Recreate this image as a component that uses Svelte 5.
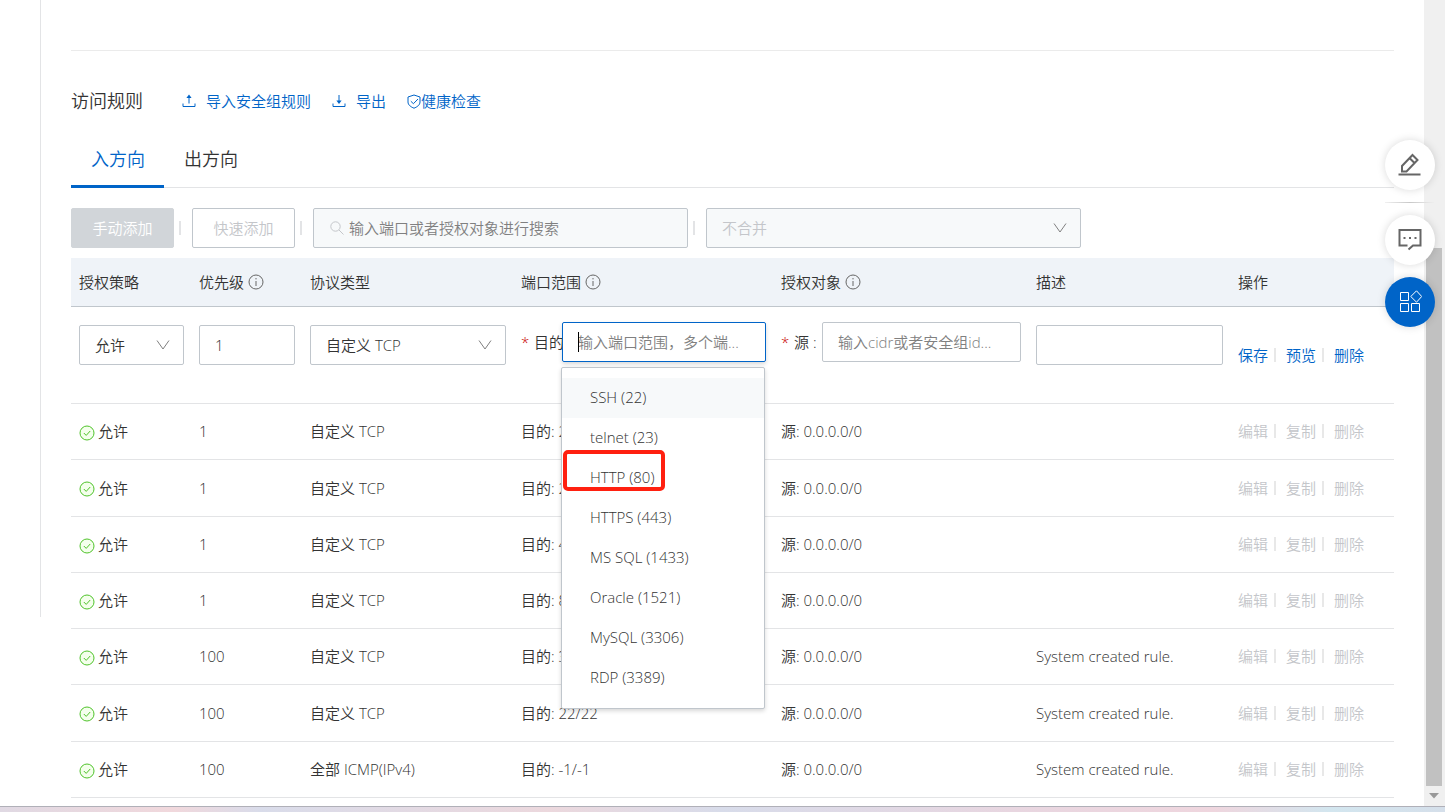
<script>
  const ports = [
    { name: 'SSH', port: 22 },
    { name: 'telnet', port: 23 },
    { name: 'HTTP', port: 80, marked: true },
    { name: 'HTTPS', port: 443 },
    { name: 'MS SQL', port: 1433 },
    { name: 'Oracle', port: 1521 },
    { name: 'MySQL', port: 3306 },
    { name: 'RDP', port: 3389 },
  ];

  const rules = [
    { priority: 1, protocol: '自定义 TCP', port: '21/21', desc: '' },
    { priority: 1, protocol: '自定义 TCP', port: '20/20', desc: '' },
    { priority: 1, protocol: '自定义 TCP', port: '443/443', desc: '' },
    { priority: 1, protocol: '自定义 TCP', port: '80/80', desc: '' },
    { priority: 100, protocol: '自定义 TCP', port: '3389/3389', desc: 'System created rule.' },
    { priority: 100, protocol: '自定义 TCP', port: '22/22', desc: 'System created rule.' },
    { priority: 100, protocol: '全部 ICMP(IPv4)', port: '-1/-1', desc: 'System created rule.' },
  ];

  let tab = $state('in');
  let priority = $state('1');
  let portRange = $state('');
  let source = $state('');
  let desc = $state('');
  let search = $state('');
  let active = $state(0);
</script>

{#snippet chevron()}
  <svg class="chevron" viewBox="0 0 14 12" width="14" height="12" aria-hidden="true">
    <path d="M1 1.5 L7 10 L13 1.5" />
  </svg>
{/snippet}

{#snippet info()}
  <svg class="info" viewBox="0 0 16 16" width="16" height="16" aria-hidden="true">
    <circle cx="8" cy="8" r="7" />
    <path d="M8 7v5M8 4v1.4" />
  </svg>
{/snippet}

<div class="page">
  <div class="body">
    <aside class="side"></aside>

    <main>
      <div class="top"></div>

      <header class="title">
        <h2>访问规则</h2>
        <a href="#import">
          <svg class="line-icon" viewBox="0 0 14 14" width="14" height="14" aria-hidden="true">
            <path d="M1 9.5v3h12v-3M7 9.5V2" /><path class="fill" d="M7 0.5l2.6 3.4H4.4z" />
          </svg>
          <span class="spaced">导入安全组规则</span>
        </a>
        <a href="#export">
          <svg class="line-icon" viewBox="0 0 14 14" width="14" height="14" aria-hidden="true">
            <path d="M1 9.5v3h12v-3M7 1v6" /><path class="fill" d="M7 10l2.6-3.4H4.4z" />
          </svg>
          <span class="spaced">导出</span>
        </a>
        <a href="#check">
          <svg class="line-icon" viewBox="0 0 14 15" width="14" height="15" aria-hidden="true">
            <path d="M7 1l6 2v5c0 3-3 5-6 6.200C4 13 1 11 1 8V3z" /><path d="M3.800 7.200l2.600 2.500L11 5" />
          </svg>
          <span>健康检查</span>
        </a>
      </header>

      <nav class="tabs">
        <button class:current={tab === 'in'} onclick={() => (tab = 'in')}>入方向</button>
        <button class:current={tab === 'out'} onclick={() => (tab = 'out')}>出方向</button>
      </nav>

      <div class="toolbar">
        <button class="btn solid" disabled>手动添加</button>
        <span class="bar"></span>
        <button class="btn" disabled>快速添加</button>
        <span class="bar"></span>
        <label class="search">
          <svg viewBox="0 0 14 14" width="14" height="14" aria-hidden="true">
            <circle cx="5.500" cy="5.500" r="4.700" /><path d="M9 9l4.500 4.500" />
          </svg>
          <input bind:value={search} type="text" placeholder="输入端口或者授权对象进行搜索" />
        </label>
        <span class="bar"></span>
        <div class="select wide">
          <select disabled aria-label="合并方式"><option>不合并</option></select>
          {@render chevron()}
        </div>
      </div>

      <table>
        <colgroup>
          <col class="c-policy" />
          <col class="c-priority" />
          <col class="c-protocol" />
          <col class="c-port" />
          <col class="c-source" />
          <col class="c-desc" />
          <col class="c-action" />
        </colgroup>
        <thead>
          <tr>
            <th>授权策略</th>
            <th>优先级 {@render info()}</th>
            <th>协议类型</th>
            <th>端口范围 {@render info()}</th>
            <th>授权对象 {@render info()}</th>
            <th>描述</th>
            <th>操作</th>
          </tr>
        </thead>
        <tbody class="edit">
          <tr>
            <td>
              <div class="select">
                <select aria-label="授权策略"><option>允许</option><option>拒绝</option></select>
                {@render chevron()}
              </div>
            </td>
            <td><input class="box" bind:value={priority} type="text" aria-label="优先级" /></td>
            <td>
              <div class="select">
                <select aria-label="协议类型"><option>自定义 TCP</option><option>全部 ICMP(IPv4)</option></select>
                {@render chevron()}
              </div>
            </td>
            <td class="required">
              <div class="field">
                <label for="port"><i>*</i>目的:</label>
                <div class="combo">
                  <input id="port" class="box focus" bind:value={portRange} type="text" placeholder="输入端口范围，多个端..." />
                  <span class="caret"></span>
                  <ul class="menu">
                    {#each ports as p, i}
                      <li class:active={active === i} onmouseenter={() => (active = i)}>
                        {p.name} ({p.port})
                        {#if p.marked}<span class="mark"></span>{/if}
                      </li>
                    {/each}
                  </ul>
                </div>
              </div>
            </td>
            <td class="required">
              <div class="field">
                <label for="source"><i>*</i>源 :</label>
                <input id="source" class="box" bind:value={source} type="text" placeholder="输入cidr或者安全组id..." />
              </div>
            </td>
            <td><input class="box" bind:value={desc} type="text" aria-label="描述" /></td>
            <td class="ops">
              <div class="actions">
                <a href="#save">保存</a><span class="sep"></span>
                <a href="#preview">预览</a><span class="sep"></span>
                <a href="#delete">删除</a>
              </div>
            </td>
          </tr>
        </tbody>
        <tbody class="rules">
          {#each rules as rule}
            <tr>
              <td>
                <div class="policy">
                  <svg viewBox="0 0 16 16" width="16" height="16" aria-hidden="true">
                    <circle cx="8" cy="8" r="7" /><path d="M4.800 8l2.400 2.400 4-4.400" />
                  </svg>
                  允许
                </div>
              </td>
              <td>{rule.priority}</td>
              <td>{rule.protocol}</td>
              <td>目的: {rule.port}</td>
              <td>源: 0.0.0.0/0</td>
              <td>{rule.desc}</td>
              <td>
                <div class="actions">
                  <button disabled>编辑</button><span class="sep"></span>
                  <button disabled>复制</button><span class="sep"></span>
                  <button disabled>删除</button>
                </div>
              </td>
            </tr>
          {/each}
        </tbody>
      </table>
    </main>

    <div class="scrollbar">
      <div class="thumb"></div>
      <svg viewBox="0 0 10 6" width="10" height="6" aria-hidden="true"><path d="M0 0h10L5 5.500z" /></svg>
    </div>
  </div>

  <footer class="strip"></footer>

  <div class="float">
    <button aria-label="编辑">
      <svg viewBox="0 0 24 24" width="24" height="24" aria-hidden="true">
        <path d="M.5 21.500h22M4 18.500v-5.500L14.500 2l5 5L8.500 18.500zM11.500 5l5 5" />
      </svg>
    </button>
    <span class="rule"></span>
    <button aria-label="反馈">
      <svg viewBox="0 0 24 24" width="24" height="24" aria-hidden="true">
        <path d="M9.500 17.500H1.500V2h21v15.500H15l-4.500 4" />
        <path class="dots" d="M5.500 9h2v2h-2zM11 9h2v2h-2zM16.500 9h2v2h-2z" />
      </svg>
    </button>
    <button class="blue" aria-label="应用">
      <svg viewBox="0 0 24 24" width="24" height="24" aria-hidden="true">
        <path d="M2.500 2.500h8v8h-8zM2.500 13.500h8v8h-8zM13.500 13.500h8v8h-8zM18.500 .800l5.200 5.700-5.200 5.700-5.700-5.700z" />
      </svg>
    </button>
  </div>
</div>

<style>
  :global(body) {
    background: #fff;
  }

  .page {
    display: flex;
    flex-direction: column;
    min-height: 100vh;
    font-family: "Open Sans", "Noto Sans CJK SC", sans-serif;
    font-size: 15px;
    font-weight: 350;
    line-height: 20px;
    color: #333;
  }

  .page * {
    box-sizing: border-box;
  }

  button,
  input,
  select {
    font: inherit;
    color: inherit;
    margin: 0;
  }

  svg {
    fill: none;
    stroke: currentColor;
    flex: none;
  }

  a {
    color: #0064c8;
    text-decoration: none;
  }

  .body {
    display: flex;
    flex: 1;
  }

  .side {
    flex: none;
    width: 41px;
    height: 76vh;
    border-right: 1px solid #e3e4e6;
  }

  main {
    flex: 1;
    min-width: 0;
    padding: 0 30px 8px;
  }

  .top {
    height: 51px;
    border-bottom: 1px solid #ebebeb;
  }

  .title {
    display: flex;
    align-items: center;
    gap: 21px;
    padding-top: 36px;
    height: 64px;
  }

  .title h2 {
    margin: 0 18px 0 0;
    font-size: 18px;
    font-weight: inherit;
  }

  .title a {
    display: flex;
    align-items: center;
  }

  .spaced {
    margin-left: 10px;
  }

  .line-icon .fill {
    fill: currentColor;
    stroke: none;
  }

  .tabs {
    display: flex;
    margin-top: 20px;
    border-bottom: 1px solid #e3e4e6;
  }

  .tabs button {
    height: 53px;
    margin-bottom: -1px;
    padding: 0 19px 2px 20px;
    border: 0;
    border-bottom: 3px solid transparent;
    background: none;
    font-size: 18px;
    cursor: pointer;
  }

  .tabs .current {
    color: #0064c8;
    border-color: #0064c8;
  }

  .toolbar {
    display: flex;
    align-items: center;
    padding: 20px 0 10px;
  }

  .btn {
    width: 103px;
    height: 40px;
    padding: 0;
    border: 1px solid #c0c6cc;
    border-radius: 2px;
    background: #fff;
    color: #c4c6ca;
  }

  .solid {
    border-color: #d1d5d9;
    background: #d1d5d9;
    color: #fff;
  }

  .bar {
    width: 2px;
    height: 14px;
    margin: 0 11px 0 5px;
    background: #e3e4e6;
  }

  .search {
    display: flex;
    align-items: center;
    gap: 5px;
    width: 375px;
    height: 40px;
    padding: 0 16px;
    border: 1px solid #c0c6cc;
    border-radius: 2px;
    background: #f7f9fa;
    color: #c4c6ca;
  }

  .search input {
    flex: 1;
    min-width: 0;
    padding: 0;
    border: 0;
    outline: 0;
    background: none;
    color: #333;
  }

  ::placeholder {
    color: #808080;
    opacity: 1;
  }

  .select {
    display: grid;
    align-items: center;
  }

  .select > :global(*) {
    grid-area: 1 / 1;
  }

  .select select {
    width: 100%;
    height: 40px;
    padding: 0 15px;
    appearance: none;
    border: 1px solid #c0c6cc;
    border-radius: 2px;
    background: #fff;
    opacity: 1;
  }

  .wide {
    width: 375px;
  }

  .wide select {
    background: #f7f9fa;
    color: #c4c6ca;
  }

  .chevron {
    justify-self: end;
    margin-right: 14px;
    color: #808080;
    pointer-events: none;
  }

  table {
    width: 100%;
    table-layout: fixed;
    border-collapse: separate;
    border-spacing: 0;
  }

  .c-policy { width: 120px; }
  .c-priority { width: 111px; }
  .c-protocol { width: 211px; }
  .c-port { width: 260px; }
  .c-source { width: 255px; }
  .c-desc { width: 202px; }
  .c-action { width: 164px; }

  th,
  td {
    padding: 0 7px 0 8px;
    text-align: left;
    font-weight: inherit;
    white-space: nowrap;
  }

  th {
    height: 49px;
    background: #eff3f8;
    border-bottom: 1px solid #c0c6cc;
  }

  .info {
    vertical-align: -2px;
    color: #666;
  }

  td {
    height: 56px;
    border-bottom: 1px solid #e3e4e6;
  }

  .rules td {
    padding-bottom: 1px;
  }

  .rules tr:nth-child(4n + 2) td {
    height: 57px;
  }

  .edit td {
    height: 97px;
    padding-top: 18px;
    vertical-align: top;
  }

  .edit .required {
    padding-top: 15px;
  }

  .edit .ops {
    padding-top: 38px;
  }

  .box {
    display: block;
    width: 100%;
    height: 40px;
    padding: 0 15px;
    border: 1px solid #c0c6cc;
    border-radius: 2px;
    outline: 0;
    background: #fff;
  }

  .focus {
    border-color: #0064c8;
    box-shadow: 0 2px 4px rgba(0, 0, 0, 0.16);
  }

  .field {
    display: flex;
    align-items: center;
  }

  .field label {
    flex: none;
    width: 41px;
  }

  .field i {
    display: inline-block;
    width: 13px;
    color: #c80000;
    font-style: normal;
  }

  .combo {
    position: relative;
    flex: 1;
  }

  .caret {
    position: absolute;
    left: 16px;
    top: 10px;
    width: 1px;
    height: 20px;
    background: #000;
  }

  .menu {
    position: absolute;
    top: 45px;
    left: -1px;
    z-index: 2;
    width: 100%;
    margin: 0;
    padding: 10px 0;
    border: 1px solid #c0c6cc;
    border-radius: 2px;
    background: #fff;
    box-shadow: 0 2px 4px rgba(0, 0, 0, 0.16);
    list-style: none;
  }

  .menu li {
    position: relative;
    height: 40px;
    padding: 0 28px;
    line-height: 38px;
    cursor: pointer;
  }

  .menu .active {
    background: #f7f9fa;
  }

  .mark {
    position: absolute;
    left: 1px;
    top: -8px;
    width: 102px;
    height: 41px;
    border: 4px solid #ff2010;
    border-radius: 5px;
  }

  .policy {
    display: flex;
    align-items: center;
    gap: 3px;
  }

  .policy svg {
    margin-top: 3px;
    fill: #f4ffec;
    stroke: #4fc32a;
  }

  .actions {
    display: flex;
    align-items: center;
  }

  .sep {
    width: 2px;
    height: 14px;
    margin: 0 10px 0 6px;
    background: #e8e8e8;
  }

  .actions button {
    padding: 0;
    border: 0;
    background: none;
    color: #c4c6ca;
  }

  .scrollbar {
    display: flex;
    flex-direction: column;
    align-items: center;
    flex: none;
    width: 21px;
    padding: 248px 3px 7px 2px;
    background: #f0f0f0;
  }

  .thumb {
    flex: 1;
    width: 100%;
    margin-bottom: 7px;
    background: #c1c1c1;
  }

  .scrollbar svg {
    fill: #999;
    stroke: none;
  }

  .strip {
    height: 6px;
    border-top: 1px solid #b0b0b8;
    background: linear-gradient(90deg, #e0d9e3, #f1d8dc 12%, #d9dcea 18%, #ecd8dd 38%, #d8dcea 50%, #e8d6e0 70%, #efd6de 84%, #d3e6ef 92%, #d5dfea);
  }

  .float {
    position: fixed;
    top: 140px;
    right: 10px;
    z-index: 3;
    display: flex;
    flex-direction: column;
    gap: 12px;
  }

  .float button {
    display: grid;
    place-items: center;
    width: 50px;
    height: 50px;
    padding: 0;
    border: 0;
    border-radius: 50%;
    background: #fff;
    box-shadow: 0 0 8px rgba(0, 0, 0, 0.15);
    color: #666;
    cursor: pointer;
  }

  .float svg {
    stroke-width: 2;
  }

  .float .dots {
    fill: #666;
    stroke: none;
  }

  .float .blue {
    background: #0064c8;
    color: #fff;
  }

  .float .blue svg {
    stroke-width: 1;
  }

  .rule {
    height: 1px;
    background: linear-gradient(90deg, #f0f0f0, #c8c8c8, #f0f0f0);
  }
</style>
